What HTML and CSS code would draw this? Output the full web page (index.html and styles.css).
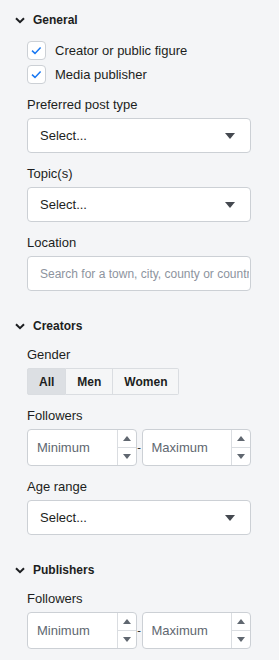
FILE: index.html
```html
<!DOCTYPE html>
<html lang="en">
<head>
  <meta charset="UTF-8">
  <meta name="viewport" content="width=device-width, initial-scale=1.0">
  <title>Filters</title>
  <link rel="stylesheet" href="styles.css">
</head>
<body>
  <div class="filters">

    <!-- General -->
    <section class="group">
      <div class="group-header">
        <svg class="chevron" width="10" height="7" viewBox="0 0 10 7"><path d="M1 1.2 L5 5.2 L9 1.2" fill="none" stroke="#1c1e21" stroke-width="2"/></svg>
        <span>General</span>
      </div>
      <div class="group-body">
        <div class="checks">
          <label class="check">
            <span class="box"><svg width="19" height="19" viewBox="0 0 19 19"><path d="M5 9.6 L8 12.4 L13.6 6.4" fill="none" stroke="#1877f2" stroke-width="1.5"/></svg></span>
            Creator or public figure
          </label>
          <label class="check">
            <span class="box"><svg width="19" height="19" viewBox="0 0 19 19"><path d="M5 9.6 L8 12.4 L13.6 6.4" fill="none" stroke="#1877f2" stroke-width="1.5"/></svg></span>
            Media publisher
          </label>
        </div>

        <div class="field">
          <div class="field-label">Preferred post type</div>
          <div class="select"><span>Select...</span><span class="caret"></span></div>
        </div>

        <div class="field">
          <div class="field-label">Topic(s)</div>
          <div class="select"><span>Select...</span><span class="caret"></span></div>
        </div>

        <div class="field">
          <div class="field-label">Location</div>
          <input class="text-input" type="text" placeholder="Search for a town, city, county or country">
        </div>
      </div>
    </section>

    <!-- Creators -->
    <section class="group">
      <div class="group-header">
        <svg class="chevron" width="10" height="7" viewBox="0 0 10 7"><path d="M1 1.2 L5 5.2 L9 1.2" fill="none" stroke="#1c1e21" stroke-width="2"/></svg>
        <span>Creators</span>
      </div>
      <div class="group-body">
        <div class="field">
          <div class="field-label">Gender</div>
          <div class="segmented">
            <button class="seg active">All</button>
            <button class="seg">Men</button>
            <button class="seg">Women</button>
          </div>
        </div>

        <div class="field">
          <div class="field-label">Followers</div>
          <div class="range">
            <div class="number">
              <input type="text" placeholder="Minimum">
              <div class="spin"><span class="up"></span><span class="down"></span></div>
            </div>
            <span class="dash">-</span>
            <div class="number">
              <input type="text" placeholder="Maximum">
              <div class="spin"><span class="up"></span><span class="down"></span></div>
            </div>
          </div>
        </div>

        <div class="field">
          <div class="field-label">Age range</div>
          <div class="select"><span>Select...</span><span class="caret"></span></div>
        </div>
      </div>
    </section>

    <!-- Publishers -->
    <section class="group">
      <div class="group-header">
        <svg class="chevron" width="10" height="7" viewBox="0 0 10 7"><path d="M1 1.2 L5 5.2 L9 1.2" fill="none" stroke="#1c1e21" stroke-width="2"/></svg>
        <span>Publishers</span>
      </div>
      <div class="group-body">
        <div class="field">
          <div class="field-label">Followers</div>
          <div class="range">
            <div class="number">
              <input type="text" placeholder="Minimum">
              <div class="spin"><span class="up"></span><span class="down"></span></div>
            </div>
            <span class="dash">-</span>
            <div class="number">
              <input type="text" placeholder="Maximum">
              <div class="spin"><span class="up"></span><span class="down"></span></div>
            </div>
          </div>
        </div>
      </div>
    </section>

  </div>
</body>
</html>
```

FILE: styles.css
```css
/* Page */
body {
  margin: 0;
  background-color: #f4f5f7;
  font-family: "Liberation Sans", Arial, sans-serif;
  font-size: 13px;
  color: #1c1e21;
}

.filters {
  padding: 10px 28px 0 15px;
}

/* Collapsible groups */
.group {
  margin-bottom: 25px;
}

.group-header {
  display: flex;
  align-items: center;
  height: 20px;
  font-size: 12px;
  font-weight: bold;
}

.chevron {
  margin-right: 8px;
}

.group-body {
  margin-left: 12px;
  padding-top: 11px;
  display: flex;
  flex-direction: column;
  gap: 13px;
}

/* Checkboxes */
.checks {
  display: flex;
  flex-direction: column;
  gap: 5px;
}

.check {
  display: flex;
  align-items: center;
  height: 19px;
}

.box {
  width: 17px;
  height: 17px;
  border: 1px solid #ccd0d5;
  border-radius: 4px;
  background-color: #ffffff;
  margin-right: 9px;
  position: relative;
}

.box svg {
  position: absolute;
  left: -1px;
  top: -1px;
}

/* Fields */
.field-label {
  line-height: 16px;
  margin-bottom: 5px;
}

.select {
  height: 33px;
  border: 1px solid #ccd0d5;
  border-radius: 4px;
  background-color: #ffffff;
  display: flex;
  align-items: center;
  justify-content: space-between;
  padding: 0 15px 0 12px;
}

.caret {
  width: 0;
  height: 0;
  border-left: 5px solid transparent;
  border-right: 5px solid transparent;
  border-top: 6px solid #444950;
}

.text-input {
  display: block;
  width: 100%;
  box-sizing: border-box;
  height: 35px;
  border: 1px solid #ccd0d5;
  border-radius: 4px;
  background-color: #ffffff;
  padding: 0 1px 0 12px;
  font-family: inherit;
  font-size: 12px;
  color: #1c1e21;
  outline: none;
}

.text-input::placeholder {
  color: #8d949e;
}

/* Segmented control */
.segmented {
  display: flex;
  align-self: flex-start;
}

.seg {
  height: 27px;
  padding: 0 11px;
  border: 1px solid #dadde1;
  border-left: none;
  background-color: #f5f6f7;
  font-family: inherit;
  font-size: 12px;
  font-weight: bold;
  color: #1c1e21;
}

.seg:first-child {
  border-left: 1px solid #dadde1;
  border-radius: 2px 0 0 2px;
}

.seg:last-child {
  border-radius: 0 2px 2px 0;
}

.seg.active {
  background-color: #dcdfe3;
}

/* Number ranges */
.range {
  display: grid;
  grid-template-columns: minmax(0, 1fr) 5px minmax(0, 1fr);
  align-items: center;
}

.number {
  height: 35px;
  border: 1px solid #ccd0d5;
  border-radius: 4px;
  background-color: #ffffff;
  display: flex;
}

.number input {
  flex: 1;
  min-width: 0;
  width: 0;
  border: none;
  background: transparent;
  padding: 0 0 0 9px;
  font-family: inherit;
  font-size: 13px;
  color: #1c1e21;
  outline: none;
}

.number input::placeholder {
  color: #606770;
}

.spin {
  width: 18px;
  border-left: 1px solid #dadde1;
  display: flex;
  flex-direction: column;
}

.spin span {
  flex: 1;
  display: flex;
  align-items: center;
  justify-content: center;
}

.spin .up {
  border-bottom: 1px solid #dadde1;
}

.spin .up::after {
  content: "";
  border-left: 4px solid transparent;
  border-right: 4px solid transparent;
  border-bottom: 5px solid #606770;
}

.spin .down::after {
  content: "";
  border-left: 4px solid transparent;
  border-right: 4px solid transparent;
  border-top: 5px solid #606770;
}

.dash {
  text-align: center;
  font-size: 11px;
  line-height: 1;
}
```
